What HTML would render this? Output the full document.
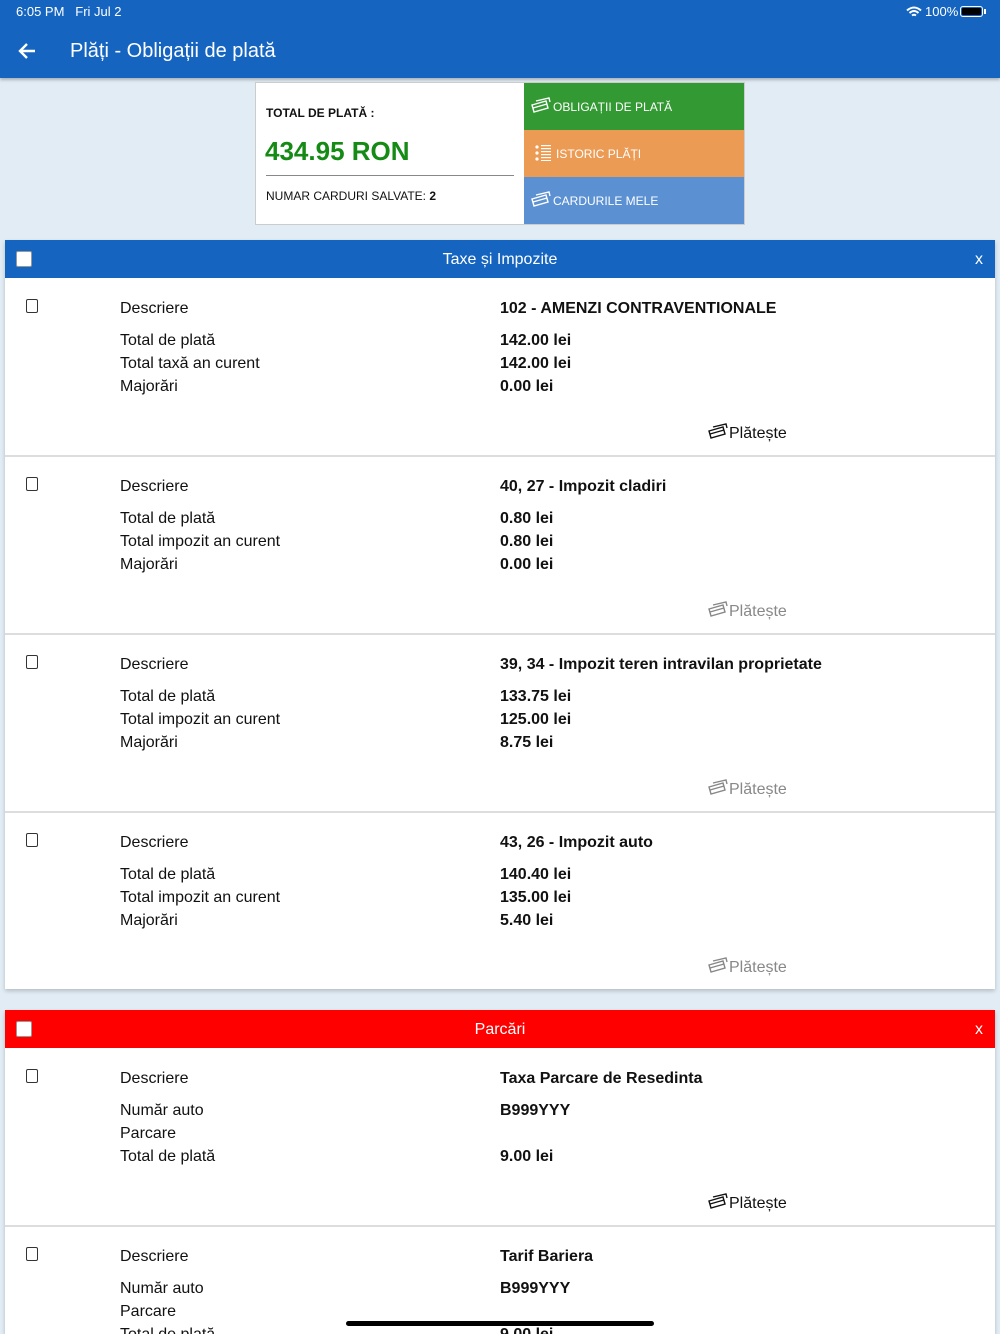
<!DOCTYPE html>
<html style="height:1334px;overflow:hidden"><head><meta charset="utf-8">
<style>
*{margin:0;padding:0;box-sizing:border-box}
body{width:1000px;height:1334px;overflow:hidden;background:#e1ecf4;font-family:"Liberation Sans",sans-serif;position:relative;color:#111}
.a{position:absolute;white-space:nowrap}
.hdr{position:absolute;left:0;top:0;width:1000px;height:78px;background:#1565c0;box-shadow:0 2px 3px rgba(0,0,0,.25)}
.card{position:absolute;left:5px;width:990px;background:#fff;box-shadow:0 2px 4px rgba(0,0,0,.2)}
.sh{position:absolute;left:0;width:990px;height:38px;color:#fff;font-size:16px;text-align:center;line-height:40px}
.sh .cb{position:absolute;left:11px;top:11px;width:16px;height:16px;background:#fff;border:1px solid #999;border-radius:2px}
.sh .x{position:absolute;right:12px;top:0;font-size:16px}
.lab{font-size:16px;color:#111;line-height:20px}
.val{font-size:16px;font-weight:bold;color:#111;line-height:20px}
.cbx{position:absolute;width:12px;height:14px;border:1.5px solid #333;border-radius:2px}
.sep{position:absolute;left:5px;width:990px;height:2px;background:#ddd}
.pay{font-size:16px;line-height:20px}
</style></head><body>
<div class="hdr"></div>
<div class="a" style="left:16px;top:4px;font-size:13px;color:#fff">6:05 PM&nbsp;&nbsp;&nbsp;Fri Jul 2</div>
<div class="a" style="left:925px;top:4px;font-size:13px;color:#fff">100%</div>
<svg class="a" style="left:906px;top:6px" width="16" height="12" viewBox="0 0 16 12"><path d="M1 4.5Q8 -1.5 15 4.5M3.5 7Q8 3 12.5 7M6 9.5Q8 8 10 9.5" stroke="#fff" stroke-width="2" fill="none"/></svg>
<div class="a" style="left:960px;top:6px;width:23px;height:11px;border:1px solid #fff;border-radius:3px;padding:1px"><div style="width:100%;height:100%;background:#000;border-radius:1px"></div></div>
<div class="a" style="left:984px;top:9px;width:2px;height:5px;background:#fff"></div>
<svg class="a" style="left:17px;top:41px" width="20" height="20" viewBox="0 0 20 20"><path d="M18 10H3M10 3L3 10L10 17" stroke="#fff" stroke-width="2.4" fill="none"/></svg>
<div class="a" style="left:70px;top:40px;font-size:20px;color:#fff">Plăți - Obligații de plată</div>

<div class="a" style="left:255px;top:82px;width:490px;height:143px;background:#fff;border:1px solid #ccc"></div>
<div class="a" style="left:266px;top:106px;font-size:12px;font-weight:bold">TOTAL DE PLATĂ :</div>
<div class="a" style="left:265px;top:136px;font-size:26px;font-weight:bold;color:#158a15">434.95 RON</div>
<div class="a" style="left:266px;top:175px;width:248px;height:1px;background:#888"></div>
<div class="a" style="left:266px;top:189px;font-size:12px">NUMAR CARDURI SALVATE: <b>2</b></div>
<div class="a" style="left:524px;top:83px;width:220px;height:47px;background:#339933"></div>
<div class="a" style="left:524px;top:130px;width:220px;height:47px;background:#eb9b53"></div>
<div class="a" style="left:524px;top:177px;width:220px;height:47px;background:#5b91d2"></div>
<svg class="a" style="left:531px;top:97px" width="20" height="18" viewBox="0 0 20 18"><g stroke="#fff" stroke-width="1.4" fill="none"><path d="M5 4L18 1L19 5"/><path d="M1 8L15 4L17 11L3 15Z"/><path d="M2 11L16 7"/></g></svg>
<div class="a" style="left:553px;top:100px;font-size:12px;color:#fff">OBLIGAȚII DE PLATĂ</div>
<svg class="a" style="left:535px;top:145px" width="16" height="16" viewBox="0 0 16 16"><g fill="#fff"><circle cx="2" cy="2" r="1.6"/><circle cx="2" cy="8" r="1.6"/><circle cx="2" cy="14" r="1.6"/><rect x="6" y="0" width="10" height="1.2"/><rect x="6" y="3" width="10" height="1.2"/><rect x="6" y="6" width="10" height="1.2"/><rect x="6" y="9" width="10" height="1.2"/><rect x="6" y="12" width="10" height="1.2"/><rect x="6" y="15" width="10" height="1"/></g></svg>
<div class="a" style="left:556px;top:147px;font-size:12px;color:#fff">ISTORIC PLĂȚI</div>
<svg class="a" style="left:531px;top:191px" width="20" height="18" viewBox="0 0 20 18"><g stroke="#fff" stroke-width="1.4" fill="none"><path d="M5 4L18 1L19 5"/><path d="M1 8L15 4L17 11L3 15Z"/><path d="M2 11L16 7"/></g></svg>
<div class="a" style="left:553px;top:194px;font-size:12px;color:#fff">CARDURILE MELE</div>

<div class="card" style="top:240px;height:749px">
<div class="sh" style="top:0;background:#1565c0"><div class="cb"></div>Taxe și Impozite<span class="x">x</span></div>
</div>
<div class="card" style="top:1010px;height:324px">
<div class="sh" style="top:0;background:#ff0000"><div class="cb"></div>Parcări<span class="x">x</span></div>
</div>

<div id="rows"></div>
<script>
var svgPay=function(c){return '<svg width="20" height="18" viewBox="0 0 20 18"><g stroke="'+c+'" stroke-width="1.4" fill="none"><path d="M5 4L18 1L19 5"/><path d="M1 8L15 4L17 11L3 15Z"/><path d="M2 11L16 7"/></g></svg>';};
var rows=[
[278,"102 - AMENZI CONTRAVENTIONALE",[["Total de plată","142.00 lei"],["Total taxă an curent","142.00 lei"],["Majorări","0.00 lei"]],"#111",true,true],
[456,"40, 27 - Impozit cladiri",[["Total de plată","0.80 lei"],["Total impozit an curent","0.80 lei"],["Majorări","0.00 lei"]],"#888",true,true],
[634,"39, 34 - Impozit teren intravilan proprietate",[["Total de plată","133.75 lei"],["Total impozit an curent","125.00 lei"],["Majorări","8.75 lei"]],"#888",true,true],
[812,"43, 26 - Impozit auto",[["Total de plată","140.40 lei"],["Total impozit an curent","135.00 lei"],["Majorări","5.40 lei"]],"#888",false,true],
[1048,"Taxa Parcare de Resedinta",[["Număr auto","B999YYY"],["Parcare",""],["Total de plată","9.00 lei"]],"#111",true,true],
[1226,"Tarif Bariera",[["Număr auto","B999YYY"],["Parcare",""],["Total de plată","9.00 lei"]],"#111",false,false]
];
var h='';
rows.forEach(function(r){var t=r[0];
h+='<div class="cbx" style="left:26px;top:'+(t+21)+'px"></div>';
h+='<div class="a lab" style="left:120px;top:'+(t+21)+'px">Descriere</div>';
h+='<div class="a val" style="left:500px;top:'+(t+21)+'px">'+r[1]+'</div>';
r[2].forEach(function(p,i){var y=t+53+i*23;
h+='<div class="a lab" style="left:120px;top:'+y+'px">'+p[0]+'</div>';
h+='<div class="a val" style="left:500px;top:'+y+'px">'+p[1]+'</div>';});
if(r[5]){
h+='<div class="a" style="left:708px;top:'+(t+145)+'px">'+svgPay(r[3])+'</div>';
h+='<div class="a pay" style="left:729px;top:'+(t+146)+'px;color:'+r[3]+'">Plătește</div>';}
if(r[4])h+='<div class="sep" style="top:'+(t+177)+'px"></div>';
});
document.getElementById('rows').outerHTML=h;
</script>
<div class="a" style="left:346px;top:1321px;width:308px;height:5px;background:#000;border-radius:3px"></div>
</body></html>
